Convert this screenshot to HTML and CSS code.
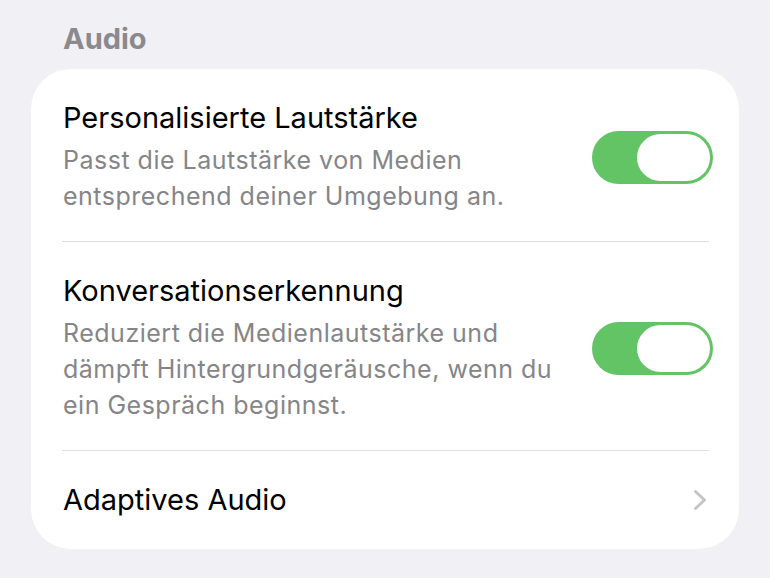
FILE: index.html
```html
<!DOCTYPE html>
<html lang="de">
<head>
    <meta charset="UTF-8">
    <meta name="viewport" content="width=device-width, initial-scale=1.0">
    <title>Audio</title>
    <link rel="stylesheet" href="styles.css">
</head>
<body>
    <h2 class="section-title">Audio</h2>
    <div class="card">
        <div class="row">
            <div class="row-text">
                <div class="row-title">Personalisierte Lautstärke</div>
                <div class="row-sub">Passt die Lautstärke von Medien<br>entsprechend deiner Umgebung an.</div>
            </div>
            <div class="toggle on"><span class="knob"></span></div>
        </div>
        <div class="row">
            <div class="row-text">
                <div class="row-title">Konversationserkennung</div>
                <div class="row-sub">Reduziert die Medienlautstärke und<br>dämpft Hintergrundgeräusche, wenn du<br>ein Gespräch beginnst.</div>
            </div>
            <div class="toggle on"><span class="knob"></span></div>
        </div>
        <div class="row last">
            <div class="row-text">
                <div class="row-title">Adaptives Audio</div>
            </div>
            <svg class="chevron" width="14" height="22" viewBox="0 0 14 22">
                <path d="M2.5 2.5 L11.5 11 L2.5 19.5" fill="none" stroke="#c4c4c7" stroke-width="3" stroke-linecap="round" stroke-linejoin="round"/>
            </svg>
        </div>
    </div>
</body>
</html>
```
FILE: styles.css
```css
/* grouped settings list */
body {
    margin: 0;
    background-color: #f0f0f5;
    font-family: Inter, "Noto Sans", sans-serif;
    color: #000;
}

.section-title {
    margin: 21px 0 12px 63px;
    font-size: 29px;
    line-height: 36px;
    font-weight: 700;
    color: #8a8a8e;
}

.card {
    margin: 0 31px;
    background-color: #fff;
    border-radius: 40px;
}

.row {
    display: flex;
    align-items: center;
    justify-content: space-between;
    margin: 0 30px 0 31px;
    padding: 31px 0 27px 1px;
    border-bottom: 1px solid #dedee2;
}

.row.last {
    border-bottom: none;
    padding: 31px 0 31px 1px;
}

.row-title {
    font-size: 29px;
    line-height: 36px;
}

.row-sub {
    margin-top: 6px;
    font-size: 25px;
    line-height: 36px;
    letter-spacing: 0.5px;
    color: #858589;
}

.toggle {
    position: relative;
    flex-shrink: 0;
    width: 121px;
    height: 53px;
    margin-right: -4px;
    border-radius: 27px;
    background-color: #e5e5ea;
}

.toggle.on {
    background-color: #63c466;
}

.toggle .knob {
    position: absolute;
    top: 3px;
    right: 3px;
    width: 73px;
    height: 47px;
    border-radius: 24px;
    background-color: #fff;
}

.chevron {
    margin-right: 2px;
}
```
